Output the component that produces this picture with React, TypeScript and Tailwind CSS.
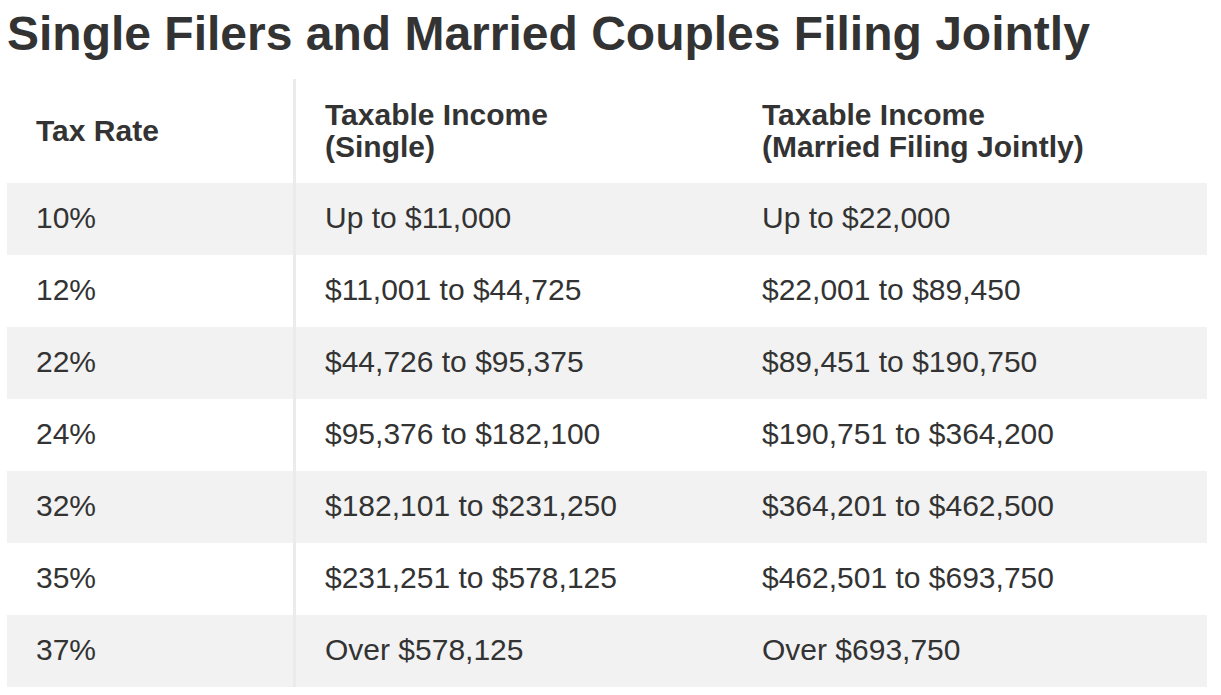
import React from "react";

const rows = [
  ["10%", "Up to $11,000", "Up to $22,000"],
  ["12%", "$11,001 to $44,725", "$22,001 to $89,450"],
  ["22%", "$44,726 to $95,375", "$89,451 to $190,750"],
  ["24%", "$95,376 to $182,100", "$190,751 to $364,200"],
  ["32%", "$182,101 to $231,250", "$364,201 to $462,500"],
  ["35%", "$231,251 to $578,125", "$462,501 to $693,750"],
  ["37%", "Over $578,125", "Over $693,750"],
];

export default function App() {
  return (
    <div className="w-[1221px] h-[695px] bg-white pl-[7px] pr-[14px] text-[#333333] font-['Liberation_Sans',Arial,sans-serif]">
      <h1 className="text-[48px] font-bold leading-[56px] pt-[6px] h-[79px]">
        Single Filers and Married Couples Filing Jointly
      </h1>
      <div className="grid grid-cols-[286px_440px_1fr]">
        <div className="h-[104px] flex items-center pl-[29px] text-[30px] font-bold leading-[32px]">
          Tax Rate
        </div>
        <div className="h-[104px] flex items-center pl-[29px] text-[30px] font-bold leading-[32px] border-l-[3px] border-[#ebebeb]">
          Taxable Income
          <br />
          (Single)
        </div>
        <div className="h-[104px] flex items-center pl-[29px] text-[30px] font-bold leading-[32px]">
          Taxable Income
          <br />
          (Married Filing Jointly)
        </div>
        {rows.map((r, i) => (
          <React.Fragment key={r[0]}>
            <div className={`h-[72px] flex items-center pl-[29px] pb-[3px] text-[30px] ${i % 2 === 0 ? "bg-[#f2f2f2]" : "bg-white"}`}>
              {r[0]}
            </div>
            <div className={`h-[72px] flex items-center pl-[29px] pb-[3px] text-[30px] border-l-[3px] border-[#ebebeb] ${i % 2 === 0 ? "bg-[#f2f2f2]" : "bg-white"}`}>
              {r[1]}
            </div>
            <div className={`h-[72px] flex items-center pl-[29px] pb-[3px] text-[30px] ${i % 2 === 0 ? "bg-[#f2f2f2]" : "bg-white"}`}>
              {r[2]}
            </div>
          </React.Fragment>
        ))}
      </div>
    </div>
  );
}
